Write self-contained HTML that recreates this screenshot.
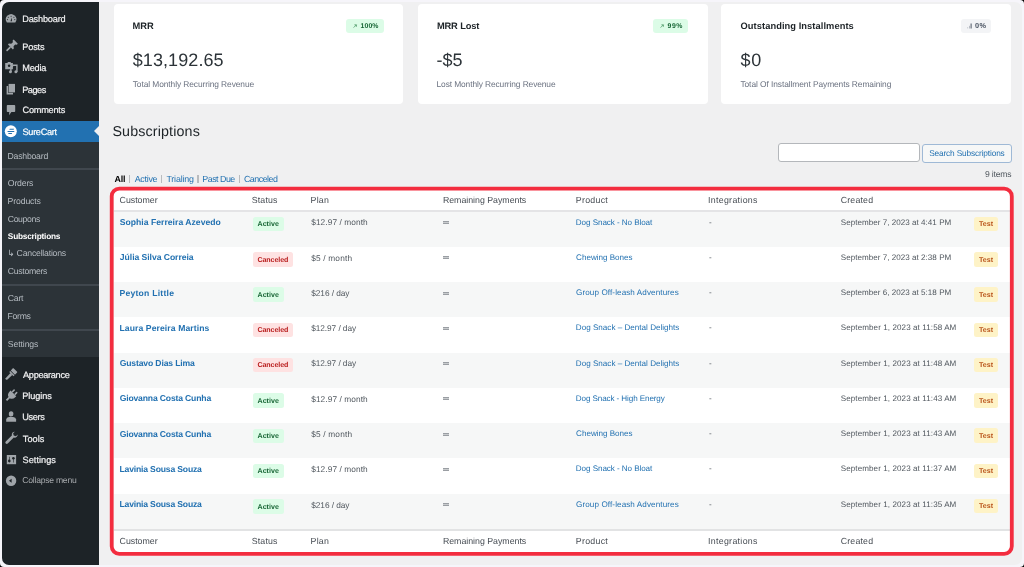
<!DOCTYPE html>
<html><head><meta charset="utf-8"><title>Subscriptions</title>
<style>
html,body{margin:0;padding:0;}
body{width:1024px;height:567px;position:relative;overflow:hidden;background:#000;font-family:"Liberation Sans",sans-serif;}
.t{position:absolute;white-space:nowrap;text-rendering:geometricPrecision;}
#w{position:absolute;left:0;top:0;width:1024px;height:567px;will-change:transform;}
.b{position:absolute;}
</style></head><body><div id="w">
<div class="b" style="left:0;top:0;width:1024px;height:567px;background:#f6f5fa;border-radius:4px;"></div>
<div class="b" style="left:2px;top:2px;width:1020px;height:563.3px;background:#f0f0f1;border-radius:7px;"></div>
<div class="b" style="left:2.00px;top:2.00px;width:97.00px;height:562.60px;background:#1d2327;border-radius:7px 0 0 7px;"></div>
<div class="b" style="left:2.00px;top:142.00px;width:97.00px;height:215.00px;background:#2c3338;"></div>
<div class="b" style="left:2.00px;top:120.50px;width:97.00px;height:21.50px;background:#2271b1;"></div>
<div class="b" style="left:94px;top:126px;width:0;height:0;border-top:5px solid transparent;border-bottom:5px solid transparent;border-right:5px solid #f0f0f1;"></div>
<div class="b" style="left:2.00px;top:168.20px;width:97.00px;height:1.70px;background:#40474e;"></div>
<div class="b" style="left:2.00px;top:284.00px;width:97.00px;height:1.70px;background:#40474e;"></div>
<div class="b" style="left:2.00px;top:329.20px;width:97.00px;height:1.70px;background:#40474e;"></div>
<div class="t" style="left:22.26px;top:14.51px;font-size:9.2px;line-height:9.2px;color:#f3f3f4;font-weight:400;letter-spacing:-0.194px;-webkit-text-stroke:0.2px currentColor;">Dashboard</div>
<div class="t" style="left:22.26px;top:42.81px;font-size:9.2px;line-height:9.2px;color:#f3f3f4;font-weight:400;letter-spacing:-0.160px;-webkit-text-stroke:0.2px currentColor;">Posts</div>
<div class="t" style="left:22.26px;top:63.81px;font-size:9.2px;line-height:9.2px;color:#f3f3f4;font-weight:400;letter-spacing:-0.208px;-webkit-text-stroke:0.2px currentColor;">Media</div>
<div class="t" style="left:22.26px;top:85.71px;font-size:9.2px;line-height:9.2px;color:#f3f3f4;font-weight:400;letter-spacing:-0.506px;-webkit-text-stroke:0.2px currentColor;">Pages</div>
<div class="t" style="left:22.54px;top:106.41px;font-size:9.2px;line-height:9.2px;color:#f3f3f4;font-weight:400;letter-spacing:-0.243px;-webkit-text-stroke:0.2px currentColor;">Comments</div>
<div class="t" style="left:22.59px;top:127.81px;font-size:9.2px;line-height:9.2px;color:#ffffff;font-weight:400;letter-spacing:-0.334px;-webkit-text-stroke:0.2px currentColor;">SureCart</div>
<div class="t" style="left:23.00px;top:371.11px;font-size:9.2px;line-height:9.2px;color:#f3f3f4;font-weight:400;letter-spacing:-0.302px;-webkit-text-stroke:0.2px currentColor;">Appearance</div>
<div class="t" style="left:22.26px;top:391.81px;font-size:9.2px;line-height:9.2px;color:#f3f3f4;font-weight:400;letter-spacing:-0.103px;-webkit-text-stroke:0.2px currentColor;">Plugins</div>
<div class="t" style="left:22.31px;top:413.31px;font-size:9.2px;line-height:9.2px;color:#f3f3f4;font-weight:400;letter-spacing:-0.375px;-webkit-text-stroke:0.2px currentColor;">Users</div>
<div class="t" style="left:22.82px;top:434.81px;font-size:9.2px;line-height:9.2px;color:#f3f3f4;font-weight:400;letter-spacing:0.031px;-webkit-text-stroke:0.2px currentColor;">Tools</div>
<div class="t" style="left:22.59px;top:455.81px;font-size:9.2px;line-height:9.2px;color:#f3f3f4;font-weight:400;letter-spacing:0.025px;-webkit-text-stroke:0.2px currentColor;">Settings</div>
<div class="t" style="left:22.37px;top:476.02px;font-size:8.6px;line-height:8.6px;color:#a7aaad;font-weight:400;letter-spacing:-0.248px;">Collapse menu</div>
<div class="t" style="left:7.50px;top:151.74px;font-size:8.7px;line-height:8.7px;color:#b5bbc1;font-weight:400;letter-spacing:-0.223px;">Dashboard</div>
<div class="t" style="left:7.81px;top:179.34px;font-size:8.7px;line-height:8.7px;color:#b5bbc1;font-weight:400;letter-spacing:-0.177px;">Orders</div>
<div class="t" style="left:7.50px;top:197.49px;font-size:8.7px;line-height:8.7px;color:#b5bbc1;font-weight:400;letter-spacing:-0.117px;">Products</div>
<div class="t" style="left:7.76px;top:214.54px;font-size:8.7px;line-height:8.7px;color:#b5bbc1;font-weight:400;letter-spacing:-0.384px;">Coupons</div>
<div class="t" style="left:7.85px;top:232.32px;font-size:8.3px;line-height:8.3px;color:#ffffff;font-weight:700;letter-spacing:-0.228px;">Subscriptions</div>
<div class="t" style="left:7.33px;top:249.49px;font-size:8.7px;line-height:8.7px;color:#b5bbc1;font-weight:400;letter-spacing:-0.213px;">&#8627; Cancellations</div>
<div class="t" style="left:7.76px;top:266.74px;font-size:8.7px;line-height:8.7px;color:#b5bbc1;font-weight:400;letter-spacing:-0.291px;">Customers</div>
<div class="t" style="left:7.76px;top:294.04px;font-size:8.7px;line-height:8.7px;color:#b5bbc1;font-weight:400;letter-spacing:-0.224px;">Cart</div>
<div class="t" style="left:7.50px;top:311.84px;font-size:8.7px;line-height:8.7px;color:#b5bbc1;font-weight:400;letter-spacing:-0.291px;">Forms</div>
<div class="t" style="left:7.81px;top:340.24px;font-size:8.7px;line-height:8.7px;color:#b5bbc1;font-weight:400;letter-spacing:-0.108px;">Settings</div>
<svg class="b" style="left:0;top:0" width="100" height="567" viewBox="0 0 100 567"><path d="M6.9 22.5 A5.2 5.2 0 1 1 15.3 22.5 Z" fill="#a0a5aa"/><circle cx="11.1" cy="16.2" r="0.55" fill="#1d2327"/><circle cx="8.3" cy="17.2" r="0.55" fill="#1d2327"/><circle cx="13.9" cy="17.2" r="0.55" fill="#1d2327"/><circle cx="7.4" cy="19.6" r="0.55" fill="#1d2327"/><circle cx="14.8" cy="19.6" r="0.55" fill="#1d2327"/><path d="M10.5 21.3 L11.6 17.6 L12.0 21.3 Z" fill="#1d2327"/><g transform="translate(11.2,46.2) rotate(45) scale(0.92)"><path d="M-3.2 -7 H3.2 V-5.4 L1.8 -4.4 V-1.8 L3.8 -0.2 V1.2 H-3.8 V-0.2 L-1.8 -1.8 V-4.4 L-3.2 -5.4 Z" fill="#a0a5aa"/><rect x="-0.9" y="1" width="1.8" height="6.2" rx="0.8" fill="#a0a5aa"/></g><path d="M5.2 62.9 H7.3 L8 61.9 H10.4 L11.1 62.9 H12.9 V69.3 H5.2 Z" fill="#a0a5aa"/><circle cx="9.1" cy="65.8" r="1.25" fill="#1d2327"/><path d="M10.9 72 V67.6 L13.3 65.2 H16.9 V72" stroke="#a0a5aa" stroke-width="1.4" fill="none"/><circle cx="10.4" cy="71.8" r="1.5" fill="#a0a5aa"/><circle cx="15.9" cy="71.8" r="1.5" fill="#a0a5aa"/><rect x="6.6" y="86" width="6.4" height="8.5" fill="#a0a5aa"/><rect x="8.1" y="83.5" width="7.2" height="9.3" fill="#1d2327"/><rect x="8.6" y="83.9" width="6.4" height="8.5" fill="#a0a5aa"/><path d="M7.6 104.9 H14.4 Q15.2 104.9 15.2 105.7 V111.2 Q15.2 112 14.4 112 H11.4 L9 115.2 L9.3 112 H7.6 Q6.8 112 6.8 111.2 V105.7 Q6.8 104.9 7.6 104.9 Z" fill="#a0a5aa"/><circle cx="10.8" cy="131.2" r="6" fill="#fff"/><path d="M9.8 128.8 H14.1 L13.6 129.8 H9.3 Z M7.8 130.9 H14.5 L14.0 131.9 H7.3 Z M8.6 133.0 H12.2 L11.7 134.0 H8.1 Z" fill="#2271b1"/><g transform="translate(10.8,374.6) rotate(45)"><rect x="-3" y="-6.4" width="6" height="3.6" rx="0.5" fill="#a0a5aa"/><rect x="-3" y="-2.2" width="6" height="1.4" fill="#a0a5aa"/><path d="M-1.3 -0.8 H1.3 L1.1 6.2 Q0 7.8 -1.1 6.2 Z" fill="#a0a5aa"/></g><g transform="translate(11,395.8) rotate(45)"><rect x="-2.6" y="-7" width="1.6" height="3.6" rx="0.8" fill="#a0a5aa"/><rect x="1" y="-7" width="1.6" height="3.6" rx="0.8" fill="#a0a5aa"/><path d="M-4 -3.4 H4 V-2.4 Q4 1.8 0.9 2.6 V6.4 H-0.9 V2.6 Q-4 1.8 -4 -2.4 Z" fill="#a0a5aa"/></g><ellipse cx="11.1" cy="413.9" rx="2.3" ry="2.6" fill="#a0a5aa"/><path d="M6.2 421.8 V419.6 Q6.4 417.2 9 416.9 H13.2 Q15.8 417.2 16.1 419.6 V421.8 Z" fill="#a0a5aa"/><g transform="translate(11,438.3) rotate(45)"><path d="M-1.4 -2.5 V6 Q-1.4 7.4 0 7.4 Q1.4 7.4 1.4 6 V-2.5 Q3 -3.5 3 -5.2 Q3 -6.6 2 -7.4 V-5 L0 -3.8 L-2 -5 V-7.4 Q-3 -6.6 -3 -5.2 Q-3 -3.5 -1.2 -2.5 Z" fill="#a0a5aa"/></g><rect x="6.8" y="455" width="9.3" height="9.2" fill="#a0a5aa"/><rect x="9" y="456.8" width="0.6" height="5.6" fill="#1d2327"/><circle cx="9.3" cy="460.9" r="1.3" fill="#1d2327"/><rect x="13.1" y="457.5" width="0.6" height="5" fill="#1d2327"/><circle cx="13.4" cy="458.3" r="1.3" fill="#1d2327"/><circle cx="11.1" cy="480.8" r="5.2" fill="#a0a5aa"/><path d="M9 480.8 L11.6 478.8 V482.8 Z" fill="#1d2327"/></svg>
<div class="b" style="left:113.50px;top:3.50px;width:289.50px;height:100.30px;background:#fff;border-radius:4px;"></div>
<div class="t" style="left:132.60px;top:22.03px;font-size:9.3px;line-height:9.3px;color:#1d2327;font-weight:700;letter-spacing:-0.034px;">MRR</div>
<div class="t" style="left:132.72px;top:51.16px;font-size:18px;line-height:18px;color:#2c3338;font-weight:400;letter-spacing:0.090px;">$13,192.65</div>
<div class="t" style="left:132.73px;top:79.89px;font-size:8.4px;line-height:8.4px;color:#6b7280;font-weight:400;letter-spacing:-0.080px;">Total Monthly Recurring Revenue</div>
<div class="b" style="left:417.80px;top:3.50px;width:290.00px;height:100.30px;background:#fff;border-radius:4px;"></div>
<div class="t" style="left:436.90px;top:22.03px;font-size:9.3px;line-height:9.3px;color:#1d2327;font-weight:700;letter-spacing:-0.127px;">MRR Lost</div>
<div class="t" style="left:436.39px;top:51.16px;font-size:18px;line-height:18px;color:#2c3338;font-weight:400;letter-spacing:0.110px;">-$5</div>
<div class="t" style="left:436.53px;top:79.89px;font-size:8.4px;line-height:8.4px;color:#6b7280;font-weight:400;letter-spacing:-0.100px;">Lost Monthly Recurring Revenue</div>
<div class="b" style="left:721.20px;top:3.50px;width:289.70px;height:100.30px;background:#fff;border-radius:4px;"></div>
<div class="t" style="left:740.53px;top:22.03px;font-size:9.3px;line-height:9.3px;color:#1d2327;font-weight:700;letter-spacing:0.071px;">Outstanding Installments</div>
<div class="t" style="left:740.42px;top:51.16px;font-size:18px;line-height:18px;color:#2c3338;font-weight:400;letter-spacing:0.830px;">$0</div>
<div class="t" style="left:740.43px;top:79.89px;font-size:8.4px;line-height:8.4px;color:#6b7280;font-weight:400;letter-spacing:-0.072px;">Total Of Installment Payments Remaining</div>
<div class="b" style="left:346.00px;top:18.70px;width:37.70px;height:14.10px;background:#dcfce7;border-radius:3px;"></div>
<div class="t" style="left:360.59px;top:24.06px;font-size:6.9px;line-height:6.9px;color:#166534;font-weight:700;letter-spacing:0.074px;">100%</div>
<svg class="b" style="left:352.80px;top:23.7px" width="5" height="5" viewBox="0 0 5 5"><path d="M0.6 3.6 L3.4 0.8 M1.4 0.8 H3.4 V2.8" stroke="#3f8f5a" stroke-width="0.7" fill="none"/></svg>
<div class="b" style="left:653.10px;top:18.70px;width:34.70px;height:14.10px;background:#dcfce7;border-radius:3px;"></div>
<div class="t" style="left:667.56px;top:24.06px;font-size:6.9px;line-height:6.9px;color:#166534;font-weight:700;letter-spacing:0.507px;">99%</div>
<svg class="b" style="left:659.60px;top:23.7px" width="5" height="5" viewBox="0 0 5 5"><path d="M0.6 3.6 L3.4 0.8 M1.4 0.8 H3.4 V2.8" stroke="#3f8f5a" stroke-width="0.7" fill="none"/></svg>
<div class="b" style="left:961.20px;top:18.70px;width:29.80px;height:14.10px;background:#f3f4f6;border-radius:3px;"></div>
<div class="t" style="left:975.01px;top:22.42px;font-size:7.3px;line-height:7.3px;color:#4b5563;font-weight:700;letter-spacing:0.526px;">0%</div>
<svg class="b" style="left:967.30px;top:22.8px" width="6" height="6" viewBox="0 0 6 6"><rect x="0.4" y="4" width="0.7" height="1.5" fill="#b9bec6"/><rect x="2" y="2.8" width="0.7" height="2.7" fill="#9ca3af"/><rect x="3.6" y="0.5" width="1" height="5" fill="#4b5563"/></svg>
<div class="t" style="left:112.46px;top:125.40px;font-size:14.3px;line-height:14.3px;color:#1d2327;font-weight:400;letter-spacing:0.131px;">Subscriptions</div>
<div class="t" style="left:114.48px;top:174.97px;font-size:8.9px;line-height:8.9px;color:#000;font-weight:700;letter-spacing:-0.173px;">All</div>
<div class="b" style="left:129.10px;top:175.30px;width:1.40px;height:7.30px;background:#b9bbbe;"></div>
<div class="b" style="left:161.00px;top:175.30px;width:1.40px;height:7.30px;background:#b9bbbe;"></div>
<div class="b" style="left:197.40px;top:175.30px;width:1.40px;height:7.30px;background:#b9bbbe;"></div>
<div class="b" style="left:239.10px;top:175.30px;width:1.40px;height:7.30px;background:#b9bbbe;"></div>
<div class="t" style="left:134.70px;top:174.97px;font-size:8.9px;line-height:8.9px;color:#2271b1;font-weight:400;letter-spacing:-0.270px;">Active</div>
<div class="t" style="left:166.42px;top:174.97px;font-size:8.9px;line-height:8.9px;color:#2271b1;font-weight:400;letter-spacing:-0.183px;">Trialing</div>
<div class="t" style="left:202.29px;top:174.97px;font-size:8.9px;line-height:8.9px;color:#2271b1;font-weight:400;letter-spacing:-0.502px;">Past Due</div>
<div class="t" style="left:243.96px;top:174.97px;font-size:8.9px;line-height:8.9px;color:#2271b1;font-weight:400;letter-spacing:-0.497px;">Canceled</div>
<div class="b" style="left:777.50px;top:143.30px;width:142.50px;height:19.20px;background:#fff;border:1px solid #b4b7bb;border-radius:3px;box-sizing:border-box;"></div>
<div class="b" style="left:922.30px;top:143.50px;width:89.30px;height:19.20px;background:#f6f7f7;border:1px solid #9fb9d6;border-radius:3px;box-sizing:border-box;"></div>
<div class="t" style="left:929.13px;top:149.27px;font-size:8.3px;line-height:8.3px;color:#2271b1;font-weight:400;letter-spacing:-0.146px;">Search Subscriptions</div>
<div class="t" style="left:984.91px;top:170.22px;font-size:8.6px;line-height:8.6px;color:#50575e;font-weight:400;letter-spacing:-0.158px;">9 items</div>
<div class="b" style="left:113.50px;top:190.00px;width:896.90px;height:363.00px;background:#fff;"></div>
<div class="t" style="left:119.56px;top:195.55px;font-size:8.8px;line-height:8.8px;color:#464c53;font-weight:400;letter-spacing:-0.005px;">Customer</div>
<div class="t" style="left:251.80px;top:195.55px;font-size:8.8px;line-height:8.8px;color:#464c53;font-weight:400;letter-spacing:0.131px;">Status</div>
<div class="t" style="left:310.60px;top:195.55px;font-size:8.8px;line-height:8.8px;color:#464c53;font-weight:400;letter-spacing:0.225px;">Plan</div>
<div class="t" style="left:442.90px;top:195.55px;font-size:8.8px;line-height:8.8px;color:#464c53;font-weight:400;letter-spacing:-0.014px;">Remaining Payments</div>
<div class="t" style="left:575.80px;top:195.55px;font-size:8.8px;line-height:8.8px;color:#464c53;font-weight:400;letter-spacing:0.272px;">Product</div>
<div class="t" style="left:707.91px;top:195.55px;font-size:8.8px;line-height:8.8px;color:#464c53;font-weight:400;letter-spacing:0.329px;">Integrations</div>
<div class="t" style="left:840.66px;top:195.55px;font-size:8.8px;line-height:8.8px;color:#464c53;font-weight:400;letter-spacing:0.188px;">Created</div>
<div class="b" style="left:113.50px;top:211.50px;width:896.90px;height:35.27px;background:#f6f7f7;"></div>
<div class="t" style="left:119.74px;top:218.12px;font-size:8.6px;line-height:8.6px;color:#2271b1;font-weight:700;letter-spacing:0.028px;">Sophia Ferreira Azevedo</div>
<div class="b" style="left:252.60px;top:216.90px;width:31.40px;height:14.50px;background:#dcfce7;border-radius:2.5px;"></div>
<div class="t" style="left:257.52px;top:221.39px;font-size:7.1px;line-height:7.1px;color:#166534;font-weight:700;letter-spacing:0.018px;">Active</div>
<div class="t" style="left:311.22px;top:218.37px;font-size:8.3px;line-height:8.3px;color:#50575e;font-weight:400;letter-spacing:0.082px;">$12.97 / month</div>
<div class="b" style="left:443.40px;top:221.00px;width:5.20px;height:1.10px;background:#9a9ea3;"></div>
<div class="b" style="left:443.40px;top:223.00px;width:5.20px;height:1.10px;background:#9a9ea3;"></div>
<div class="b" style="left:443.40px;top:222.10px;width:5.20px;height:0.90px;background:#c9ccce;"></div>
<div class="t" style="left:575.85px;top:218.54px;font-size:8.1px;line-height:8.1px;color:#2271b1;font-weight:400;letter-spacing:-0.073px;">Dog Snack - No Bloat</div>
<div class="t" style="left:709.00px;top:218.54px;font-size:8.1px;line-height:8.1px;color:#50575e;font-weight:400;">-</div>
<div class="t" style="left:840.74px;top:218.59px;font-size:8.05px;line-height:8.05px;color:#50575e;font-weight:400;letter-spacing:0.034px;">September 7, 2023 at 4:41 PM</div>
<div class="b" style="left:974.10px;top:216.80px;width:24.20px;height:14.50px;background:#fef3c7;border-radius:2.5px;"></div>
<div class="t" style="left:978.93px;top:221.29px;font-size:7.1px;line-height:7.1px;color:#b9531a;font-weight:700;letter-spacing:0.061px;">Test</div>
<div class="t" style="left:119.87px;top:253.39px;font-size:8.6px;line-height:8.6px;color:#2271b1;font-weight:700;letter-spacing:-0.045px;">J&uacute;lia Silva Correia</div>
<div class="b" style="left:252.60px;top:252.17px;width:40.40px;height:14.50px;background:#fee2e2;border-radius:2.5px;"></div>
<div class="t" style="left:257.42px;top:256.66px;font-size:7.1px;line-height:7.1px;color:#b91c1c;font-weight:700;letter-spacing:-0.088px;">Canceled</div>
<div class="t" style="left:311.22px;top:253.64px;font-size:8.3px;line-height:8.3px;color:#50575e;font-weight:400;letter-spacing:0.178px;">$5 / month</div>
<div class="b" style="left:443.40px;top:256.27px;width:5.20px;height:1.10px;background:#9a9ea3;"></div>
<div class="b" style="left:443.40px;top:258.27px;width:5.20px;height:1.10px;background:#9a9ea3;"></div>
<div class="b" style="left:443.40px;top:257.37px;width:5.20px;height:0.90px;background:#c9ccce;"></div>
<div class="t" style="left:576.10px;top:253.81px;font-size:8.1px;line-height:8.1px;color:#2271b1;font-weight:400;letter-spacing:-0.021px;">Chewing Bones</div>
<div class="t" style="left:709.00px;top:253.81px;font-size:8.1px;line-height:8.1px;color:#50575e;font-weight:400;">-</div>
<div class="t" style="left:840.74px;top:253.86px;font-size:8.05px;line-height:8.05px;color:#50575e;font-weight:400;letter-spacing:0.034px;">September 7, 2023 at 2:38 PM</div>
<div class="b" style="left:974.10px;top:252.07px;width:24.20px;height:14.50px;background:#fef3c7;border-radius:2.5px;"></div>
<div class="t" style="left:978.93px;top:256.56px;font-size:7.1px;line-height:7.1px;color:#b9531a;font-weight:700;letter-spacing:0.061px;">Test</div>
<div class="b" style="left:113.50px;top:282.04px;width:896.90px;height:35.27px;background:#f6f7f7;"></div>
<div class="t" style="left:119.44px;top:288.66px;font-size:8.6px;line-height:8.6px;color:#2271b1;font-weight:700;letter-spacing:0.251px;">Peyton Little</div>
<div class="b" style="left:252.60px;top:287.44px;width:31.40px;height:14.50px;background:#dcfce7;border-radius:2.5px;"></div>
<div class="t" style="left:257.52px;top:291.93px;font-size:7.1px;line-height:7.1px;color:#166534;font-weight:700;letter-spacing:0.018px;">Active</div>
<div class="t" style="left:311.22px;top:288.91px;font-size:8.3px;line-height:8.3px;color:#50575e;font-weight:400;letter-spacing:-0.053px;">$216 / day</div>
<div class="b" style="left:443.40px;top:291.54px;width:5.20px;height:1.10px;background:#9a9ea3;"></div>
<div class="b" style="left:443.40px;top:293.54px;width:5.20px;height:1.10px;background:#9a9ea3;"></div>
<div class="b" style="left:443.40px;top:292.64px;width:5.20px;height:0.90px;background:#c9ccce;"></div>
<div class="t" style="left:576.10px;top:289.08px;font-size:8.1px;line-height:8.1px;color:#2271b1;font-weight:400;letter-spacing:0.096px;">Group Off-leash Adventures</div>
<div class="t" style="left:709.00px;top:289.08px;font-size:8.1px;line-height:8.1px;color:#50575e;font-weight:400;">-</div>
<div class="t" style="left:840.74px;top:289.13px;font-size:8.05px;line-height:8.05px;color:#50575e;font-weight:400;letter-spacing:0.034px;">September 6, 2023 at 5:18 PM</div>
<div class="b" style="left:974.10px;top:287.34px;width:24.20px;height:14.50px;background:#fef3c7;border-radius:2.5px;"></div>
<div class="t" style="left:978.93px;top:291.83px;font-size:7.1px;line-height:7.1px;color:#b9531a;font-weight:700;letter-spacing:0.061px;">Test</div>
<div class="t" style="left:119.44px;top:323.93px;font-size:8.6px;line-height:8.6px;color:#2271b1;font-weight:700;letter-spacing:0.098px;">Laura Pereira Martins</div>
<div class="b" style="left:252.60px;top:322.71px;width:40.40px;height:14.50px;background:#fee2e2;border-radius:2.5px;"></div>
<div class="t" style="left:257.42px;top:327.20px;font-size:7.1px;line-height:7.1px;color:#b91c1c;font-weight:700;letter-spacing:-0.088px;">Canceled</div>
<div class="t" style="left:311.22px;top:324.18px;font-size:8.3px;line-height:8.3px;color:#50575e;font-weight:400;letter-spacing:-0.074px;">$12.97 / day</div>
<div class="b" style="left:443.40px;top:326.81px;width:5.20px;height:1.10px;background:#9a9ea3;"></div>
<div class="b" style="left:443.40px;top:328.81px;width:5.20px;height:1.10px;background:#9a9ea3;"></div>
<div class="b" style="left:443.40px;top:327.91px;width:5.20px;height:0.90px;background:#c9ccce;"></div>
<div class="t" style="left:575.85px;top:324.35px;font-size:8.1px;line-height:8.1px;color:#2271b1;font-weight:400;letter-spacing:0.003px;">Dog Snack &ndash; Dental Delights</div>
<div class="t" style="left:709.00px;top:324.35px;font-size:8.1px;line-height:8.1px;color:#50575e;font-weight:400;">-</div>
<div class="t" style="left:840.74px;top:324.40px;font-size:8.05px;line-height:8.05px;color:#50575e;font-weight:400;letter-spacing:0.091px;">September 1, 2023 at 11:58 AM</div>
<div class="b" style="left:974.10px;top:322.61px;width:24.20px;height:14.50px;background:#fef3c7;border-radius:2.5px;"></div>
<div class="t" style="left:978.93px;top:327.10px;font-size:7.1px;line-height:7.1px;color:#b9531a;font-weight:700;letter-spacing:0.061px;">Test</div>
<div class="b" style="left:113.50px;top:352.58px;width:896.90px;height:35.27px;background:#f6f7f7;"></div>
<div class="t" style="left:119.66px;top:359.20px;font-size:8.6px;line-height:8.6px;color:#2271b1;font-weight:700;letter-spacing:-0.134px;">Gustavo Dias Lima</div>
<div class="b" style="left:252.60px;top:357.98px;width:40.40px;height:14.50px;background:#fee2e2;border-radius:2.5px;"></div>
<div class="t" style="left:257.42px;top:362.47px;font-size:7.1px;line-height:7.1px;color:#b91c1c;font-weight:700;letter-spacing:-0.088px;">Canceled</div>
<div class="t" style="left:311.22px;top:359.45px;font-size:8.3px;line-height:8.3px;color:#50575e;font-weight:400;letter-spacing:-0.074px;">$12.97 / day</div>
<div class="b" style="left:443.40px;top:362.08px;width:5.20px;height:1.10px;background:#9a9ea3;"></div>
<div class="b" style="left:443.40px;top:364.08px;width:5.20px;height:1.10px;background:#9a9ea3;"></div>
<div class="b" style="left:443.40px;top:363.18px;width:5.20px;height:0.90px;background:#c9ccce;"></div>
<div class="t" style="left:575.85px;top:359.62px;font-size:8.1px;line-height:8.1px;color:#2271b1;font-weight:400;letter-spacing:0.003px;">Dog Snack &ndash; Dental Delights</div>
<div class="t" style="left:709.00px;top:359.62px;font-size:8.1px;line-height:8.1px;color:#50575e;font-weight:400;">-</div>
<div class="t" style="left:840.74px;top:359.67px;font-size:8.05px;line-height:8.05px;color:#50575e;font-weight:400;letter-spacing:0.091px;">September 1, 2023 at 11:48 AM</div>
<div class="b" style="left:974.10px;top:357.88px;width:24.20px;height:14.50px;background:#fef3c7;border-radius:2.5px;"></div>
<div class="t" style="left:978.93px;top:362.37px;font-size:7.1px;line-height:7.1px;color:#b9531a;font-weight:700;letter-spacing:0.061px;">Test</div>
<div class="t" style="left:119.66px;top:394.47px;font-size:8.6px;line-height:8.6px;color:#2271b1;font-weight:700;letter-spacing:-0.160px;">Giovanna Costa Cunha</div>
<div class="b" style="left:252.60px;top:393.25px;width:31.40px;height:14.50px;background:#dcfce7;border-radius:2.5px;"></div>
<div class="t" style="left:257.52px;top:397.74px;font-size:7.1px;line-height:7.1px;color:#166534;font-weight:700;letter-spacing:0.018px;">Active</div>
<div class="t" style="left:311.22px;top:394.72px;font-size:8.3px;line-height:8.3px;color:#50575e;font-weight:400;letter-spacing:0.082px;">$12.97 / month</div>
<div class="b" style="left:443.40px;top:397.35px;width:5.20px;height:1.10px;background:#9a9ea3;"></div>
<div class="b" style="left:443.40px;top:399.35px;width:5.20px;height:1.10px;background:#9a9ea3;"></div>
<div class="b" style="left:443.40px;top:398.45px;width:5.20px;height:0.90px;background:#c9ccce;"></div>
<div class="t" style="left:575.85px;top:394.89px;font-size:8.1px;line-height:8.1px;color:#2271b1;font-weight:400;letter-spacing:-0.107px;">Dog Snack - High Energy</div>
<div class="t" style="left:709.00px;top:394.89px;font-size:8.1px;line-height:8.1px;color:#50575e;font-weight:400;">-</div>
<div class="t" style="left:840.74px;top:394.94px;font-size:8.05px;line-height:8.05px;color:#50575e;font-weight:400;letter-spacing:0.091px;">September 1, 2023 at 11:43 AM</div>
<div class="b" style="left:974.10px;top:393.15px;width:24.20px;height:14.50px;background:#fef3c7;border-radius:2.5px;"></div>
<div class="t" style="left:978.93px;top:397.64px;font-size:7.1px;line-height:7.1px;color:#b9531a;font-weight:700;letter-spacing:0.061px;">Test</div>
<div class="b" style="left:113.50px;top:423.12px;width:896.90px;height:35.27px;background:#f6f7f7;"></div>
<div class="t" style="left:119.66px;top:429.74px;font-size:8.6px;line-height:8.6px;color:#2271b1;font-weight:700;letter-spacing:-0.160px;">Giovanna Costa Cunha</div>
<div class="b" style="left:252.60px;top:428.52px;width:31.40px;height:14.50px;background:#dcfce7;border-radius:2.5px;"></div>
<div class="t" style="left:257.52px;top:433.01px;font-size:7.1px;line-height:7.1px;color:#166534;font-weight:700;letter-spacing:0.018px;">Active</div>
<div class="t" style="left:311.22px;top:429.99px;font-size:8.3px;line-height:8.3px;color:#50575e;font-weight:400;letter-spacing:0.178px;">$5 / month</div>
<div class="b" style="left:443.40px;top:432.62px;width:5.20px;height:1.10px;background:#9a9ea3;"></div>
<div class="b" style="left:443.40px;top:434.62px;width:5.20px;height:1.10px;background:#9a9ea3;"></div>
<div class="b" style="left:443.40px;top:433.72px;width:5.20px;height:0.90px;background:#c9ccce;"></div>
<div class="t" style="left:576.10px;top:430.16px;font-size:8.1px;line-height:8.1px;color:#2271b1;font-weight:400;letter-spacing:-0.021px;">Chewing Bones</div>
<div class="t" style="left:709.00px;top:430.16px;font-size:8.1px;line-height:8.1px;color:#50575e;font-weight:400;">-</div>
<div class="t" style="left:840.74px;top:430.21px;font-size:8.05px;line-height:8.05px;color:#50575e;font-weight:400;letter-spacing:0.091px;">September 1, 2023 at 11:43 AM</div>
<div class="b" style="left:974.10px;top:428.42px;width:24.20px;height:14.50px;background:#fef3c7;border-radius:2.5px;"></div>
<div class="t" style="left:978.93px;top:432.91px;font-size:7.1px;line-height:7.1px;color:#b9531a;font-weight:700;letter-spacing:0.061px;">Test</div>
<div class="t" style="left:119.44px;top:465.01px;font-size:8.6px;line-height:8.6px;color:#2271b1;font-weight:700;letter-spacing:-0.170px;">Lavinia Sousa Souza</div>
<div class="b" style="left:252.60px;top:463.79px;width:31.40px;height:14.50px;background:#dcfce7;border-radius:2.5px;"></div>
<div class="t" style="left:257.52px;top:468.28px;font-size:7.1px;line-height:7.1px;color:#166534;font-weight:700;letter-spacing:0.018px;">Active</div>
<div class="t" style="left:311.22px;top:465.26px;font-size:8.3px;line-height:8.3px;color:#50575e;font-weight:400;letter-spacing:0.082px;">$12.97 / month</div>
<div class="b" style="left:443.40px;top:467.89px;width:5.20px;height:1.10px;background:#9a9ea3;"></div>
<div class="b" style="left:443.40px;top:469.89px;width:5.20px;height:1.10px;background:#9a9ea3;"></div>
<div class="b" style="left:443.40px;top:468.99px;width:5.20px;height:0.90px;background:#c9ccce;"></div>
<div class="t" style="left:575.85px;top:465.43px;font-size:8.1px;line-height:8.1px;color:#2271b1;font-weight:400;letter-spacing:-0.073px;">Dog Snack - No Bloat</div>
<div class="t" style="left:709.00px;top:465.43px;font-size:8.1px;line-height:8.1px;color:#50575e;font-weight:400;">-</div>
<div class="t" style="left:840.74px;top:465.48px;font-size:8.05px;line-height:8.05px;color:#50575e;font-weight:400;letter-spacing:0.091px;">September 1, 2023 at 11:37 AM</div>
<div class="b" style="left:974.10px;top:463.69px;width:24.20px;height:14.50px;background:#fef3c7;border-radius:2.5px;"></div>
<div class="t" style="left:978.93px;top:468.18px;font-size:7.1px;line-height:7.1px;color:#b9531a;font-weight:700;letter-spacing:0.061px;">Test</div>
<div class="b" style="left:113.50px;top:493.66px;width:896.90px;height:35.27px;background:#f6f7f7;"></div>
<div class="t" style="left:119.44px;top:500.28px;font-size:8.6px;line-height:8.6px;color:#2271b1;font-weight:700;letter-spacing:-0.170px;">Lavinia Sousa Souza</div>
<div class="b" style="left:252.60px;top:499.06px;width:31.40px;height:14.50px;background:#dcfce7;border-radius:2.5px;"></div>
<div class="t" style="left:257.52px;top:503.55px;font-size:7.1px;line-height:7.1px;color:#166534;font-weight:700;letter-spacing:0.018px;">Active</div>
<div class="t" style="left:311.22px;top:500.53px;font-size:8.3px;line-height:8.3px;color:#50575e;font-weight:400;letter-spacing:-0.053px;">$216 / day</div>
<div class="b" style="left:443.40px;top:503.16px;width:5.20px;height:1.10px;background:#9a9ea3;"></div>
<div class="b" style="left:443.40px;top:505.16px;width:5.20px;height:1.10px;background:#9a9ea3;"></div>
<div class="b" style="left:443.40px;top:504.26px;width:5.20px;height:0.90px;background:#c9ccce;"></div>
<div class="t" style="left:576.10px;top:500.70px;font-size:8.1px;line-height:8.1px;color:#2271b1;font-weight:400;letter-spacing:0.096px;">Group Off-leash Adventures</div>
<div class="t" style="left:709.00px;top:500.70px;font-size:8.1px;line-height:8.1px;color:#50575e;font-weight:400;">-</div>
<div class="t" style="left:840.74px;top:500.75px;font-size:8.05px;line-height:8.05px;color:#50575e;font-weight:400;letter-spacing:0.091px;">September 1, 2023 at 11:35 AM</div>
<div class="b" style="left:974.10px;top:498.96px;width:24.20px;height:14.50px;background:#fef3c7;border-radius:2.5px;"></div>
<div class="t" style="left:978.93px;top:503.45px;font-size:7.1px;line-height:7.1px;color:#b9531a;font-weight:700;letter-spacing:0.061px;">Test</div>
<div class="b" style="left:113.50px;top:210.20px;width:896.90px;height:1.70px;background:#e4e4e6;"></div>
<div class="b" style="left:113.50px;top:528.60px;width:896.90px;height:2.00px;background:#e2e3e4;"></div>
<div class="t" style="left:119.56px;top:536.95px;font-size:8.8px;line-height:8.8px;color:#464c53;font-weight:400;letter-spacing:-0.005px;">Customer</div>
<div class="t" style="left:251.80px;top:536.95px;font-size:8.8px;line-height:8.8px;color:#464c53;font-weight:400;letter-spacing:0.131px;">Status</div>
<div class="t" style="left:310.60px;top:536.95px;font-size:8.8px;line-height:8.8px;color:#464c53;font-weight:400;letter-spacing:0.225px;">Plan</div>
<div class="t" style="left:442.90px;top:536.95px;font-size:8.8px;line-height:8.8px;color:#464c53;font-weight:400;letter-spacing:-0.014px;">Remaining Payments</div>
<div class="t" style="left:575.80px;top:536.95px;font-size:8.8px;line-height:8.8px;color:#464c53;font-weight:400;letter-spacing:0.272px;">Product</div>
<div class="t" style="left:707.91px;top:536.95px;font-size:8.8px;line-height:8.8px;color:#464c53;font-weight:400;letter-spacing:0.329px;">Integrations</div>
<div class="t" style="left:840.66px;top:536.95px;font-size:8.8px;line-height:8.8px;color:#464c53;font-weight:400;letter-spacing:0.188px;">Created</div>
<svg class="b" style="left:0;top:0" width="1024" height="567" viewBox="0 0 1024 567"><rect x="111.7" y="188.7" width="900.1" height="365.1" rx="7.6" fill="none" stroke="#f32d3f" stroke-width="3.8"/></svg>
</div></body></html>
